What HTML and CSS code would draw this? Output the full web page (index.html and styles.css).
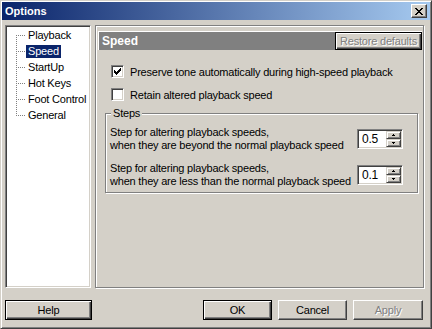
FILE: index.html
```html
<!DOCTYPE html>
<html>
<head>
<meta charset="utf-8">
<title>Options</title>
<link rel="stylesheet" href="styles.css">
</head>
<body>
<div class="window">
  <div class="titlebar">
    <span class="title">Options</span>
    <span class="close"><svg class="x-icon" width="8" height="7" viewBox="0 0 8 7" shape-rendering="crispEdges"><path d="M0 0h2v1h-2zM6 0h2v1h-2zM1 1h2v1h-2zM5 1h2v1h-2zM2 2h4v1h-4zM3 3h2v1h-2zM2 4h4v1h-4zM1 5h2v1h-2zM5 5h2v1h-2zM0 6h2v1h-2zM6 6h2v1h-2z" fill="#000"/></svg></span>
  </div>
  <div class="content">
    <div class="tree">
      <ul class="tree-list">
        <li class="item"><span class="label">Playback</span></li>
        <li class="item"><span class="label selected">Speed</span></li>
        <li class="item"><span class="label">StartUp</span></li>
        <li class="item"><span class="label">Hot Keys</span></li>
        <li class="item"><span class="label">Foot Control</span></li>
        <li class="item"><span class="label">General</span></li>
      </ul>
    </div>
    <div class="panel">
      <div class="header">
        <span class="header-title">Speed</span>
        <span class="btn default disabled restore">Restore defaults</span>
      </div>
      <div class="checks">
        <div class="check">
          <span class="box"><svg width="7" height="7" viewBox="0 0 7 7" shape-rendering="crispEdges"><path d="M0 2h1v3h-1zM1 3h1v3h-1zM2 4h1v3h-1zM3 3h1v3h-1zM4 2h1v3h-1zM5 1h1v3h-1zM6 0h1v3h-1z" fill="#000"/></svg></span>
          <span class="check-text">Preserve tone automatically during high-speed playback</span>
        </div>
        <div class="check">
          <span class="box"></span>
          <span class="check-text">Retain altered playback speed</span>
        </div>
      </div>
      <fieldset class="group">
        <legend class="legend">Steps</legend>
        <div class="row">
          <div class="row-text">Step for altering playback speeds,<br>when they are beyond the normal playback speed</div>
          <div class="spin">
            <span class="spin-value">0.5</span>
            <span class="spin-buttons">
              <span class="spin-btn"><svg width="3" height="2" viewBox="0 0 3 2" shape-rendering="crispEdges"><path d="M1 0h1v1h-1zM0 1h3v1h-3z" fill="#000"/></svg></span>
              <span class="spin-btn"><svg width="3" height="2" viewBox="0 0 3 2" shape-rendering="crispEdges"><path d="M0 0h3v1h-3zM1 1h1v1h-1z" fill="#000"/></svg></span>
            </span>
          </div>
        </div>
        <div class="row">
          <div class="row-text">Step for altering playback speeds,<br>when they are less than the normal playback speed</div>
          <div class="spin">
            <span class="spin-value">0.1</span>
            <span class="spin-buttons">
              <span class="spin-btn"><svg width="3" height="2" viewBox="0 0 3 2" shape-rendering="crispEdges"><path d="M1 0h1v1h-1zM0 1h3v1h-3z" fill="#000"/></svg></span>
              <span class="spin-btn"><svg width="3" height="2" viewBox="0 0 3 2" shape-rendering="crispEdges"><path d="M0 0h3v1h-3zM1 1h1v1h-1z" fill="#000"/></svg></span>
            </span>
          </div>
        </div>
      </fieldset>
    </div>
  </div>
  <div class="footer">
    <span class="btn default help">Help</span>
    <span class="btn default action">OK</span>
    <span class="btn action">Cancel</span>
    <span class="btn disabled action apply">Apply</span>
  </div>
</div>
</body>
</html>
```
FILE: styles.css
```css
html, body {
  margin: 0;
  padding: 0;
  background: #d4d0c8;
  overflow: hidden;
}

.window {
  width: 432px;
  height: 329px;
  box-sizing: border-box;
  background: #d4d0c8;
  border: 1px solid;
  border-color: #d4d0c8 #404040 #404040 #d4d0c8;
  box-shadow: inset 1px 1px #fff, inset -1px -1px #808080;
  padding: 1px;
  display: flex;
  flex-direction: column;
  font-family: "Liberation Sans", Arial, sans-serif;
  font-size: 11px;
  letter-spacing: -0.2px;
  color: #000;
}

.titlebar {
  height: 18px;
  flex: none;
  background: linear-gradient(to right, #0a246a, #a6caf0);
  display: flex;
  align-items: center;
  justify-content: space-between;
  padding: 0 3px 0 3px;
}

.title {
  color: #fff;
  font-weight: bold;
  letter-spacing: 0;
}

.close {
  width: 16px;
  height: 14px;
  box-sizing: border-box;
  background: #d4d0c8;
  border: 1px solid;
  border-color: #fff #404040 #404040 #fff;
  box-shadow: inset -1px -1px #808080;
  display: flex;
  align-items: center;
  justify-content: center;
}

.x-icon {
  display: block;
  margin-left: 0px;
}

.content {
  display: flex;
  margin-top: 5px;
  height: 263px;
  flex: none;
  padding: 0 6px 0 3px;
  gap: 4px;
}

.tree {
  width: 86px;
  flex: none;
  box-sizing: border-box;
  background: #fff;
  border: 1px solid;
  border-color: #808080 #fff #fff #808080;
  box-shadow: inset 1px 1px #404040, inset -1px -1px #d4d0c8;
  padding: 1px;
}

.tree-list {
  list-style: none;
  margin: 0;
  padding: 0;
  background: repeating-linear-gradient(to bottom, #808080 0 1px, transparent 1px 2px) 9px 8px / 1px 81px no-repeat;
}

.item {
  height: 16px;
  display: flex;
  align-items: center;
  padding-left: 19px;
  background: repeating-linear-gradient(to right, #808080 0 1px, transparent 1px 2px) 11px 8px / 8px 1px no-repeat;
}

.label {
  padding: 0 2px;
  line-height: 13px;
  white-space: nowrap;
}

.selected {
  background: #0a246a;
  color: #fff;
}

.panel {
  flex: 1;
  border: 1px solid #808080;
  box-shadow: inset 1px 1px #fff, 1px 1px #fff;
  display: flex;
  flex-direction: column;
}

.header {
  height: 19px;
  box-sizing: border-box;
  margin: 5px 1px 0 2px;
  background: #808080;
  border-top: 1px solid #fff;
  border-left: 1px solid #fff;
  display: flex;
  align-items: center;
  justify-content: space-between;
  padding-left: 3px;
}

.header-title {
  color: #fff;
  font-weight: bold;
  font-size: 12px;
  letter-spacing: 0;
}

.btn {
  box-sizing: border-box;
  background: #d4d0c8;
  border: 1px solid;
  border-color: #fff #404040 #404040 #fff;
  box-shadow: inset -1px -1px #808080;
  display: flex;
  align-items: center;
  justify-content: center;
  white-space: nowrap;
}

.btn.default {
  border-color: #000;
  box-shadow: inset 1px 1px #fff, inset -1px -1px #404040, inset -2px -2px #808080;
}

.disabled {
  color: #808080;
  text-shadow: 1px 1px #fff;
}

.restore {
  width: 87px;
  height: 18px;
}

.checks {
  padding: 15px 0 0 15px;
  display: flex;
  flex-direction: column;
  gap: 10px;
}

.check {
  display: flex;
  align-items: center;
  gap: 6px;
  height: 13px;
}

.box {
  width: 13px;
  height: 13px;
  flex: none;
  box-sizing: border-box;
  background: #fff;
  border: 1px solid;
  border-color: #808080 #fff #fff #808080;
  box-shadow: inset 1px 1px #404040, inset -1px -1px #d4d0c8;
  display: flex;
  align-items: center;
  justify-content: center;
}

.box svg {
  display: block;
}

.check-text {
  white-space: nowrap;
}

.group {
  margin: 6px 5px 0 9px;
  border: 1px solid #808080;
  box-shadow: inset 1px 1px #fff, 1px 1px #fff;
  padding: 7px 14px 4px 4px;
  display: flex;
  flex-direction: column;
  gap: 10px;
}

.legend {
  padding: 0 2px;
  margin-left: 1px;
  line-height: 12px;
  background: #d4d0c8;
}

.row {
  display: flex;
  justify-content: space-between;
  align-items: center;
  height: 26px;
}

.row-text {
  line-height: 13px;
  white-space: nowrap;
}

.spin {
  width: 46px;
  height: 20px;
  box-sizing: border-box;
  background: #fff;
  border: 1px solid;
  border-color: #808080 #fff #fff #808080;
  box-shadow: inset 1px 1px #404040, inset -1px -1px #d4d0c8;
  padding: 1px;
  display: flex;
}

.spin-value {
  flex: 1;
  padding-left: 3px;
  font-size: 12px;
  line-height: 16px;
}

.spin-buttons {
  width: 15px;
  display: flex;
  flex-direction: column;
}

.spin-btn {
  flex: 1;
  box-sizing: border-box;
  background: #d4d0c8;
  border: 1px solid;
  border-color: #d4d0c8 #404040 #404040 #d4d0c8;
  box-shadow: inset 1px 1px #fff, inset -1px -1px #808080;
  display: flex;
  align-items: center;
  justify-content: center;
}

.spin-btn svg {
  display: block;
}

.footer {
  display: flex;
  margin-top: 12px;
  padding: 0 7px 0 3px;
  gap: 6px;
}

.help {
  width: 87px;
  height: 20px;
  margin-right: auto;
}

.action {
  width: 69px;
  height: 20px;
}

.apply {
  width: 70px;
}
```
